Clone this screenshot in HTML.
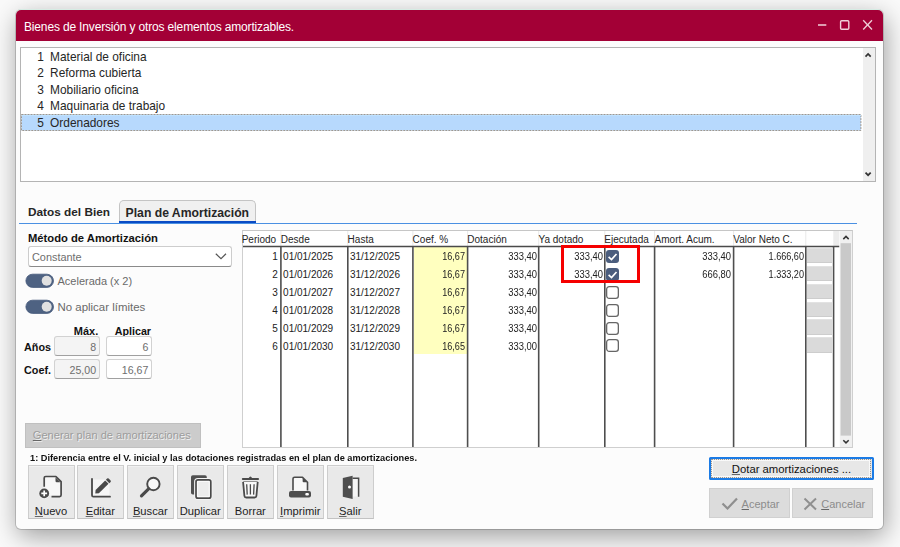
<!DOCTYPE html>
<html><head><meta charset="utf-8">
<style>
html,body{margin:0;padding:0;}
body{width:900px;height:547px;overflow:hidden;background:#fafafa;position:relative;font-family:"Liberation Sans",sans-serif;}
.a{position:absolute;white-space:pre;}
#win{position:absolute;left:16px;top:10px;width:867px;height:519px;background:#fcfcfc;border-radius:5px;box-shadow:0 -1px 0 0 #d6ece4,0 0 0 1px rgba(0,0,0,0.16),2px 7px 26px rgba(0,0,0,0.38);overflow:hidden;}
#title{position:absolute;left:0;top:0;width:867px;height:31px;background:#a30036;}
.tt{color:#fff;font-size:12px;letter-spacing:-0.16px;}
#list{position:absolute;left:4px;top:37px;width:854px;height:133px;border:1px solid #b4b4b4;background:#fff;}
.li{font-size:11.9px;color:#262626;}
.sb{position:absolute;background:#efefef;}
.tab{font-size:12px;font-weight:700;color:#262626;}
.th{font-size:10px;color:#262626;}
.td{font-size:10px;color:#222;}
.vl{position:absolute;top:16px;width:1px;height:201px;background:#4a4a4a;}
.hl{position:absolute;top:1px;width:1px;height:15px;background:#e6e6e6;}
.cb{position:absolute;width:12px;height:12px;border-radius:3px;box-sizing:border-box;}
.cbu{border:1.3px solid #555;background:#fff;}
.cbc{background:#4a5c7c;}
.gc{position:absolute;left:566px;width:24px;height:16px;background:#dadada;border:1px solid #ececec;box-sizing:border-box;}
.tb{position:absolute;top:455.3px;width:47px;height:53.4px;background:#e9e9e9;border:1px solid #cdcdcd;border-bottom-color:#c2c2c2;box-sizing:border-box;box-shadow:inset 0 1px 0 #f1f1f1;}
.tbl{position:absolute;left:0;width:45px;top:39.2px;text-align:center;font-size:11.2px;color:#1e1e1e;}
.u{text-decoration:underline;text-decoration-thickness:1px;text-underline-offset:1px;text-decoration-skip-ink:none;text-decoration-color:#666;}
.inp{width:45.8px;box-sizing:border-box;border:1px solid #d2d2d2;border-bottom-color:#a0a0a0;border-radius:3px;}
.it{width:41.6px;text-align:right;font-size:10.6px;color:#6e6e6e;}
</style></head><body>
<div id="win">
  <div id="title">
    <div class="a tt" style="left:8px;top:9.5px;">Bienes de Inversión y otros elementos amortizables.</div>
    <svg style="position:absolute;left:795px;top:0" width="72" height="31">
      <line x1="7" y1="15" x2="15.3" y2="15" stroke="#f0d0da" stroke-width="1.7"/>
      <rect x="29.6" y="10.7" width="8.2" height="8.6" fill="none" stroke="#f0d0da" stroke-width="1.4" rx="1"/>
      <line x1="52.2" y1="10.3" x2="61" y2="19.5" stroke="#f0d0da" stroke-width="1.3"/>
      <line x1="61" y1="10.3" x2="52.2" y2="19.5" stroke="#f0d0da" stroke-width="1.3"/>
    </svg>
  </div>

  <div id="list">
    <svg class="a" style="left:0px;top:66px" width="841" height="17"><rect x="0.5" y="0.5" width="839.4" height="16" fill="#b7d9fd" stroke="#9d978f" stroke-width="1" stroke-dasharray="2,1"/><line x1="1" y1="1.5" x2="840" y2="1.5" stroke="#bfe2ff" stroke-width="1"/></svg>
    <div class="a li" style="left:16.3px;top:2.00px;">1</div><div class="a li" style="left:29.1px;top:2.00px;">Material de oficina</div>
    <div class="a li" style="left:16.3px;top:18.45px;">2</div><div class="a li" style="left:29.1px;top:18.45px;">Reforma cubierta</div>
    <div class="a li" style="left:16.3px;top:34.90px;">3</div><div class="a li" style="left:29.1px;top:34.90px;">Mobiliario oficina</div>
    <div class="a li" style="left:16.3px;top:51.35px;">4</div><div class="a li" style="left:29.1px;top:51.35px;">Maquinaria de trabajo</div>
    <div class="a li" style="left:16.3px;top:67.80px;">5</div><div class="a li" style="left:29.1px;top:67.80px;">Ordenadores</div>
    <div class="sb" style="left:842px;top:0;width:12px;height:133px;"></div>
    <svg style="position:absolute;left:842px;top:0" width="12" height="133">
      <polyline points="2.5,8.6 5.1,6 7.7,8.6" fill="none" stroke="#333" stroke-width="1.7"/>
      <polyline points="2.5,124.6 5.1,127.2 7.7,124.6" fill="none" stroke="#333" stroke-width="1.7"/>
    </svg>
  </div>

  <!-- tabs -->
  <div class="a tab" style="left:12px;top:194.8px;font-size:11.8px;">Datos del Bien</div>
  <div class="a" style="left:103px;top:190px;width:135px;height:22px;background:#f0f0f0;border:1px solid #c4c4c4;border-bottom:none;border-radius:5px 5px 0 0;"></div>
  <div class="a tab" style="left:109.6px;top:195.8px;font-size:12.2px;">Plan de Amortización</div>
  <div class="a" style="left:3px;top:213px;width:838px;height:1px;background:#4a90e2;"></div>
  <div class="a" style="left:103px;top:211px;width:137px;height:2px;background:#0a4bc4;"></div>

  <!-- left panel -->
  <div class="a" style="left:12px;top:221.6px;font-size:11.23px;font-weight:700;color:#111;">Método de Amortización</div>
  <div class="a" style="left:12px;top:236px;width:202px;height:19.2px;background:#fff;border:1px solid #cdcdcd;border-bottom-color:#8a8a8a;border-radius:3px;"></div>
  <div class="a" style="left:16px;top:240.8px;font-size:10.9px;color:#6e6e6e;">Constante</div>
  <svg style="position:absolute;left:197.5px;top:242px" width="14" height="10"><polyline points="1.8,1.8 7,6.6 12,1.8" fill="none" stroke="#555" stroke-width="1.2"/></svg>

  <svg class="a" style="left:9px;top:263px" width="30" height="16"><rect x="0.9" y="1.2" width="27.6" height="13.2" rx="6.6" fill="#4e6282" stroke="#44587a" stroke-width="0.8"/><circle cx="21.7" cy="7.8" r="5" fill="#e1e1e1"/></svg>
  <div class="a" style="left:41.5px;top:265px;font-size:11px;color:#6a6a6a;">Acelerada (x 2)</div>
  <svg class="a" style="left:9px;top:289.2px" width="30" height="16"><rect x="0.9" y="1.2" width="27.6" height="13.2" rx="6.6" fill="#4e6282" stroke="#44587a" stroke-width="0.8"/><circle cx="21.7" cy="7.8" r="5" fill="#e1e1e1"/></svg>
  <div class="a" style="left:41.5px;top:291px;font-size:11.45px;color:#6a6a6a;">No aplicar límites</div>

  <div class="a" style="left:57.8px;top:314.5px;font-size:11px;font-weight:700;color:#111;">Máx.</div>
  <div class="a" style="left:98.8px;top:314.5px;font-size:10.7px;font-weight:700;color:#111;">Aplicar</div>
  <div class="a" style="left:8px;top:330.6px;font-size:10.8px;font-weight:700;color:#111;">Años</div>
  <div class="a" style="left:8px;top:353.5px;font-size:10.8px;font-weight:700;color:#111;">Coef.</div>
  <div class="a inp" style="left:38.4px;top:326.2px;height:19.4px;background:#f4f4f4;"></div>
  <div class="a inp" style="left:90.2px;top:326.2px;height:19.4px;background:#fff;"></div>
  <div class="a inp" style="left:38.4px;top:348.9px;height:19.8px;background:#f4f4f4;"></div>
  <div class="a inp" style="left:90.2px;top:348.9px;height:19.8px;background:#fff;"></div>
  <div class="a it" style="left:38.5px;top:330.8px;">8</div>
  <div class="a it" style="left:90.7px;top:330.8px;">6</div>
  <div class="a it" style="left:38.5px;top:353.8px;">25,00</div>
  <div class="a it" style="left:90.7px;top:353.8px;">16,67</div>

  <div class="a" style="left:9px;top:413px;width:176px;height:25px;box-sizing:border-box;background:#cccccc;border:1px solid #c0c0c0;"></div>
  <div class="a" style="left:16.8px;top:419.3px;font-size:11.1px;color:#9c9c9c;text-shadow:0.8px 0.8px 0 rgba(255,255,255,0.75);"><span class="u">G</span>enerar plan de amortizaciones</div>

  <div class="a" style="left:14.4px;top:442px;font-size:9.8px;font-weight:700;color:#111;transform:scaleX(0.941);transform-origin:0 0;">1: Diferencia entre el V. inicial y las dotaciones registradas en el plan de amortizaciones.</div>


  <!-- toolbar -->
  <div class="tb" style="left:11.5px"><div class="tbl"><span class="u">N</span>uevo</div></div>
  <div class="tb" style="left:60.8px"><div class="tbl"><span class="u">E</span>ditar</div></div>
  <div class="tb" style="left:110.8px"><div class="tbl"><span class="u">B</span>uscar</div></div>
  <div class="tb" style="left:160.8px"><div class="tbl">Duplicar</div></div>
  <div class="tb" style="left:210.8px"><div class="tbl">Borrar</div></div>
  <div class="tb" style="left:260.8px"><div class="tbl"><span class="u">I</span>mprimir</div></div>
  <div class="tb" style="left:310.8px"><div class="tbl"><span class="u">S</span>alir</div></div>

  <!-- right buttons -->
  <div class="a" style="left:693px;top:447px;width:164.6px;height:23.4px;box-sizing:border-box;border:2px solid #1b7be5;border-radius:1.5px;background:#e7e7e7;"></div>
  <div class="a" style="left:695.4px;top:449.4px;width:159.8px;height:18.7px;box-sizing:border-box;border:1px dotted #9c958e;"></div>
  <div class="a" style="left:696.4px;top:450.4px;width:157.8px;height:16.7px;box-sizing:border-box;border:1px solid #f9f9f9;"></div>
  <div class="a" style="left:715.8px;top:452.8px;font-size:11.3px;color:#111;"><span class="u">D</span>otar amortizaciones ...</div>
  <div class="a" style="left:693px;top:478px;width:81px;height:30px;background:#dcdcdc;border:1px solid #d0d0d0;box-sizing:border-box;"></div>
  <div class="a" style="left:776px;top:478px;width:81px;height:30px;background:#dcdcdc;border:1px solid #d0d0d0;box-sizing:border-box;"></div>
  <div class="a" style="left:725.6px;top:487.5px;font-size:11px;color:#8c8c8c;"><span class="u">A</span>ceptar</div>
  <div class="a" style="left:805.2px;top:487.5px;font-size:11px;color:#8c8c8c;"><span class="u">C</span>ancelar</div>
</div>
<!--GRID-->
<div class="a" style="left:242px;top:230px;width:611px;height:218px;box-sizing:border-box;background:#fff;border:1px solid #cfcfcf;border-top-color:#c6c6c6;"></div>
<div class="a" style="left:413.7px;top:247px;width:53.1px;height:106.8px;background:#ffffbf;"></div>
<div class="a" style="left:807.3px;top:247.80px;width:25px;height:15.50px;background:#dadada;box-shadow:inset 0 -1px 0 #cdcdcd,inset 0 1px 0 #e2e2e2;"></div>
<div class="a" style="left:807.3px;top:265.70px;width:25px;height:15.50px;background:#dadada;box-shadow:inset 0 -1px 0 #cdcdcd,inset 0 1px 0 #e2e2e2;"></div>
<div class="a" style="left:807.3px;top:283.60px;width:25px;height:15.50px;background:#dadada;box-shadow:inset 0 -1px 0 #cdcdcd,inset 0 1px 0 #e2e2e2;"></div>
<div class="a" style="left:807.3px;top:301.50px;width:25px;height:15.50px;background:#dadada;box-shadow:inset 0 -1px 0 #cdcdcd,inset 0 1px 0 #e2e2e2;"></div>
<div class="a" style="left:807.3px;top:319.40px;width:25px;height:15.50px;background:#dadada;box-shadow:inset 0 -1px 0 #cdcdcd,inset 0 1px 0 #e2e2e2;"></div>
<div class="a" style="left:807.3px;top:337.30px;width:25px;height:15.50px;background:#dadada;box-shadow:inset 0 -1px 0 #cdcdcd,inset 0 1px 0 #e2e2e2;"></div>
<svg class="a" style="left:0;top:0" width="900" height="547">
<line x1="280.9" y1="231" x2="280.9" y2="246" stroke="#e9e9e9" stroke-width="1"/>
<line x1="347.8" y1="231" x2="347.8" y2="246" stroke="#e9e9e9" stroke-width="1"/>
<line x1="412.9" y1="231" x2="412.9" y2="246" stroke="#e9e9e9" stroke-width="1"/>
<line x1="467.6" y1="231" x2="467.6" y2="246" stroke="#e9e9e9" stroke-width="1"/>
<line x1="538.7" y1="231" x2="538.7" y2="246" stroke="#e9e9e9" stroke-width="1"/>
<line x1="604.8" y1="231" x2="604.8" y2="246" stroke="#e9e9e9" stroke-width="1"/>
<line x1="654.6" y1="231" x2="654.6" y2="246" stroke="#e9e9e9" stroke-width="1"/>
<line x1="733.6" y1="231" x2="733.6" y2="246" stroke="#e9e9e9" stroke-width="1"/>
<line x1="805.8" y1="231" x2="805.8" y2="246" stroke="#e9e9e9" stroke-width="1"/>
<rect x="833.3" y="231" width="6" height="15" fill="#ececec"/>
<line x1="243" y1="246.5" x2="839.3" y2="246.5" stroke="#4a4a4a" stroke-width="1.5"/>
<line x1="280.9" y1="247" x2="280.9" y2="447" stroke="#4e4e4e" stroke-width="1.6"/>
<line x1="347.8" y1="247" x2="347.8" y2="447" stroke="#4e4e4e" stroke-width="1.6"/>
<line x1="412.9" y1="247" x2="412.9" y2="447" stroke="#4e4e4e" stroke-width="1.6"/>
<line x1="467.6" y1="247" x2="467.6" y2="447" stroke="#4e4e4e" stroke-width="1.6"/>
<line x1="538.7" y1="247" x2="538.7" y2="447" stroke="#4e4e4e" stroke-width="1.6"/>
<line x1="604.8" y1="247" x2="604.8" y2="447" stroke="#4e4e4e" stroke-width="1.6"/>
<line x1="654.6" y1="247" x2="654.6" y2="447" stroke="#4e4e4e" stroke-width="1.6"/>
<line x1="733.6" y1="247" x2="733.6" y2="447" stroke="#4e4e4e" stroke-width="1.6"/>
<line x1="805.8" y1="247" x2="805.8" y2="447" stroke="#4e4e4e" stroke-width="1.6"/>
<line x1="833.6" y1="247" x2="833.6" y2="447" stroke="#4e4e4e" stroke-width="1.6"/>
<rect x="839.8" y="231" width="12.2" height="216" fill="#f0f0f0"/>
<rect x="840.6" y="243.2" width="10.4" height="192.4" fill="#c9c9c9"/>
<polyline points="843.3,239.1 846,236.4 848.7,239.1" fill="none" stroke="#333" stroke-width="1.5"/>
<polyline points="843.3,440.2 846,442.9 848.7,440.2" fill="none" stroke="#333" stroke-width="1.5"/>
</svg>
<div class="a th" style="left:241.7px;top:234.24px;">Periodo</div>
<div class="a th" style="left:280.8px;top:234.24px;">Desde</div>
<div class="a th" style="left:347.6px;top:234.24px;">Hasta</div>
<div class="a th" style="left:412.6px;top:234.24px;">Coef. %</div>
<div class="a th" style="left:467.3px;top:234.24px;">Dotación</div>
<div class="a th" style="left:538.5px;top:234.24px;">Ya dotado</div>
<div class="a th" style="left:604.3px;top:234.24px;">Ejecutada</div>
<div class="a th" style="left:654.6px;top:234.24px;">Amort. Acum.</div>
<div class="a th" style="left:733.3px;top:234.24px;">Valor Neto C.</div>
<div class="a td" style="left:197.8px;width:80px;text-align:right;top:251.14px;">1</div>
<div class="a td" style="left:283.1px;top:251.14px;">01/01/2025</div>
<div class="a td" style="left:349.9px;top:251.14px;">31/12/2025</div>
<div class="a td" style="left:384.9px;width:80px;text-align:right;top:251.14px;transform:scaleX(0.91);transform-origin:100% 0;">16,67</div>
<div class="a td" style="left:456.7px;width:80px;text-align:right;top:251.14px;transform:scaleX(0.94);transform-origin:100% 0;">333,40</div>
<div class="a td" style="left:522.8px;width:80px;text-align:right;top:251.14px;transform:scaleX(0.94);transform-origin:100% 0;">333,40</div>
<div class="a td" style="left:650.9px;width:80px;text-align:right;top:251.14px;transform:scaleX(0.94);transform-origin:100% 0;">333,40</div>
<div class="a td" style="left:723.9px;width:80px;text-align:right;top:251.14px;transform:scaleX(0.91);transform-origin:100% 0;">1.666,60</div>
<svg class="a" style="left:606.4px;top:249.90px" width="13" height="13"><rect x="0" y="0" width="13" height="13" rx="3" fill="#4b5d7d"/><polyline points="2.6,6.9 5.5,9.6 10.5,4" fill="none" stroke="#fff" stroke-width="1.7"/></svg>
<div class="a td" style="left:197.8px;width:80px;text-align:right;top:269.04px;">2</div>
<div class="a td" style="left:283.1px;top:269.04px;">01/01/2026</div>
<div class="a td" style="left:349.9px;top:269.04px;">31/12/2026</div>
<div class="a td" style="left:384.9px;width:80px;text-align:right;top:269.04px;transform:scaleX(0.91);transform-origin:100% 0;">16,67</div>
<div class="a td" style="left:456.7px;width:80px;text-align:right;top:269.04px;transform:scaleX(0.94);transform-origin:100% 0;">333,40</div>
<div class="a td" style="left:522.8px;width:80px;text-align:right;top:269.04px;transform:scaleX(0.94);transform-origin:100% 0;">333,40</div>
<div class="a td" style="left:650.9px;width:80px;text-align:right;top:269.04px;transform:scaleX(0.94);transform-origin:100% 0;">666,80</div>
<div class="a td" style="left:723.9px;width:80px;text-align:right;top:269.04px;transform:scaleX(0.91);transform-origin:100% 0;">1.333,20</div>
<svg class="a" style="left:606.4px;top:267.80px" width="13" height="13"><rect x="0" y="0" width="13" height="13" rx="3" fill="#4b5d7d"/><polyline points="2.6,6.9 5.5,9.6 10.5,4" fill="none" stroke="#fff" stroke-width="1.7"/></svg>
<div class="a td" style="left:197.8px;width:80px;text-align:right;top:286.94px;">3</div>
<div class="a td" style="left:283.1px;top:286.94px;">01/01/2027</div>
<div class="a td" style="left:349.9px;top:286.94px;">31/12/2027</div>
<div class="a td" style="left:384.9px;width:80px;text-align:right;top:286.94px;transform:scaleX(0.91);transform-origin:100% 0;">16,67</div>
<div class="a td" style="left:456.7px;width:80px;text-align:right;top:286.94px;transform:scaleX(0.94);transform-origin:100% 0;">333,40</div>
<svg class="a" style="left:606.4px;top:285.70px" width="13" height="13"><rect x="0.65" y="0.65" width="11.7" height="11.7" rx="2.6" fill="#fff" stroke="#666" stroke-width="1.3"/></svg>
<div class="a td" style="left:197.8px;width:80px;text-align:right;top:304.84px;">4</div>
<div class="a td" style="left:283.1px;top:304.84px;">01/01/2028</div>
<div class="a td" style="left:349.9px;top:304.84px;">31/12/2028</div>
<div class="a td" style="left:384.9px;width:80px;text-align:right;top:304.84px;transform:scaleX(0.91);transform-origin:100% 0;">16,67</div>
<div class="a td" style="left:456.7px;width:80px;text-align:right;top:304.84px;transform:scaleX(0.94);transform-origin:100% 0;">333,40</div>
<svg class="a" style="left:606.4px;top:303.60px" width="13" height="13"><rect x="0.65" y="0.65" width="11.7" height="11.7" rx="2.6" fill="#fff" stroke="#666" stroke-width="1.3"/></svg>
<div class="a td" style="left:197.8px;width:80px;text-align:right;top:322.74px;">5</div>
<div class="a td" style="left:283.1px;top:322.74px;">01/01/2029</div>
<div class="a td" style="left:349.9px;top:322.74px;">31/12/2029</div>
<div class="a td" style="left:384.9px;width:80px;text-align:right;top:322.74px;transform:scaleX(0.91);transform-origin:100% 0;">16,67</div>
<div class="a td" style="left:456.7px;width:80px;text-align:right;top:322.74px;transform:scaleX(0.94);transform-origin:100% 0;">333,40</div>
<svg class="a" style="left:606.4px;top:321.50px" width="13" height="13"><rect x="0.65" y="0.65" width="11.7" height="11.7" rx="2.6" fill="#fff" stroke="#666" stroke-width="1.3"/></svg>
<div class="a td" style="left:197.8px;width:80px;text-align:right;top:340.64px;">6</div>
<div class="a td" style="left:283.1px;top:340.64px;">01/01/2030</div>
<div class="a td" style="left:349.9px;top:340.64px;">31/12/2030</div>
<div class="a td" style="left:384.9px;width:80px;text-align:right;top:340.64px;transform:scaleX(0.91);transform-origin:100% 0;">16,65</div>
<div class="a td" style="left:456.7px;width:80px;text-align:right;top:340.64px;transform:scaleX(0.94);transform-origin:100% 0;">333,00</div>
<svg class="a" style="left:606.4px;top:339.40px" width="13" height="13"><rect x="0.65" y="0.65" width="11.7" height="11.7" rx="2.6" fill="#fff" stroke="#666" stroke-width="1.3"/></svg>
<!--/GRID-->
<!-- overlay in page coords -->
<div class="a" style="left:561px;top:245px;width:79px;height:38px;box-sizing:border-box;border:3.3px solid #f50000;"></div>
<svg class="a" style="left:0;top:0" width="900" height="547">
  <!-- nuevo -->
  <path d="M44.2,486.7 V478 Q44.2,476.5 45.7,476.5 H55.9 L61.1,481.7 V495.1 Q61.1,496.6 59.6,496.6 H51.5" fill="#f7f7f7" stroke="#4a4a4a" stroke-width="1.7" stroke-linejoin="round"/>
  <rect x="43" y="487.5" width="8" height="8" fill="#f7f7f7"/>
  <path d="M55.5,477.3 V481 Q55.5,482.2 56.7,482.2 H60.5 Z" fill="#4a4a4a"/>
  <circle cx="44.2" cy="493.4" r="5.6" fill="#f1f1f1"/>
  <circle cx="44.2" cy="493.4" r="4.9" fill="#4a4a4a"/>
  <path d="M44.2,490.5 V496.3 M41.3,493.4 H47.1" stroke="#fff" stroke-width="1.7"/>
  <!-- editar -->
  <rect x="92.5" y="479.5" width="17" height="16.5" fill="#f6f6f6"/>
  <path d="M92,478.8 V495.3 Q92,496.7 93.4,496.7 H110" fill="none" stroke="#4a4a4a" stroke-width="1.8" stroke-linecap="round"/>
  <path d="M95.3,493.6 L95.6,490.0 L105.2,480.4 L108.5,483.7 L98.9,493.3 Z" fill="#4a4a4a"/>
  <path d="M105.9,479.7 L107.1,478.5 Q107.9,477.8 108.7,478.5 L110.6,480.4 Q111.3,481.2 110.6,482 L109.3,483.2 Z" fill="#4a4a4a"/>
  <!-- buscar -->
  <circle cx="153.4" cy="484" r="6.2" fill="#f8f8f8" stroke="#4a4a4a" stroke-width="1.9"/>
  <line x1="148.6" y1="488.8" x2="141.5" y2="495.8" stroke="#4a4a4a" stroke-width="3.2" stroke-linecap="round"/>
  <!-- duplicar -->
  <rect x="191" y="475.3" width="15.8" height="19.3" rx="1.8" fill="#505050"/>
  <rect x="195.6" y="479.4" width="15.4" height="19" rx="2.2" fill="#ececec" stroke="#f4f4f4" stroke-width="3"/>
  <rect x="196" y="479.9" width="14.8" height="18.3" rx="2" fill="#ececec" stroke="#4a4a4a" stroke-width="1.7"/>
  <rect x="197.6" y="481.5" width="11.6" height="15.1" fill="none" stroke="#fafafa" stroke-width="1"/>
  <!-- trash -->
  <path d="M242.9,479 H258" stroke="#4a4a4a" stroke-width="2.2" stroke-linecap="round"/>
  <path d="M248.6,478.2 Q250.4,474.6 252.2,478.2 Z" fill="#4a4a4a"/>
  <path d="M243.2,481.6 H257.7" stroke="#8a8a8a" stroke-width="1"/>
  <path d="M243.1,482 L244.4,495.8 Q244.6,497.5 246.2,497.5 H254.6 Q256.2,497.5 256.4,495.8 L257.7,482" fill="#f8f8f8" stroke="#4a4a4a" stroke-width="1.8"/>
  <path d="M246.7,484.3 L247.2,494.6 M250.4,484.3 V494.6 M254.1,484.3 L253.6,494.6" stroke="#4a4a4a" stroke-width="1.3"/>
  <!-- printer -->
  <path d="M293,490.5 V478.8 Q293,477.2 294.6,477.2 H302.5 L307.5,482.2 V490.5" fill="#f8f8f8" stroke="#4a4a4a" stroke-width="1.6" stroke-linejoin="round"/>
  <path d="M302.6,477.6 V481.2 Q302.6,482.2 303.6,482.2 H307.2 Z" fill="#4a4a4a"/>
  <rect x="289" y="491" width="22" height="6.4" rx="2" fill="#4e4e4e"/>
  <rect x="305.3" y="493" width="3.6" height="2.6" rx="1" fill="#fff"/>
  <!-- door -->
  <rect x="353" y="478.5" width="5.5" height="18" fill="#f5f5f5"/>
  <path d="M342.8,478 L352.6,475.8 V499 L342.8,496.7 Z" fill="#4e4e4e"/>
  <path d="M352.6,478.3 H358.6 V496.7" fill="none" stroke="#4a4a4a" stroke-width="1.5"/>
  <circle cx="349.5" cy="487" r="1.5" fill="#fff"/>
  <!-- aceptar check -->
  <path d="M722.5,503.5 L727.5,508.5 L737,498.5" fill="none" stroke="#8f8f8f" stroke-width="2.2"/>
  <path d="M804.5,498.5 L816,509.5 M816,498.5 L804.5,509.5" fill="none" stroke="#8f8f8f" stroke-width="2"/>
</svg>
</body></html>
